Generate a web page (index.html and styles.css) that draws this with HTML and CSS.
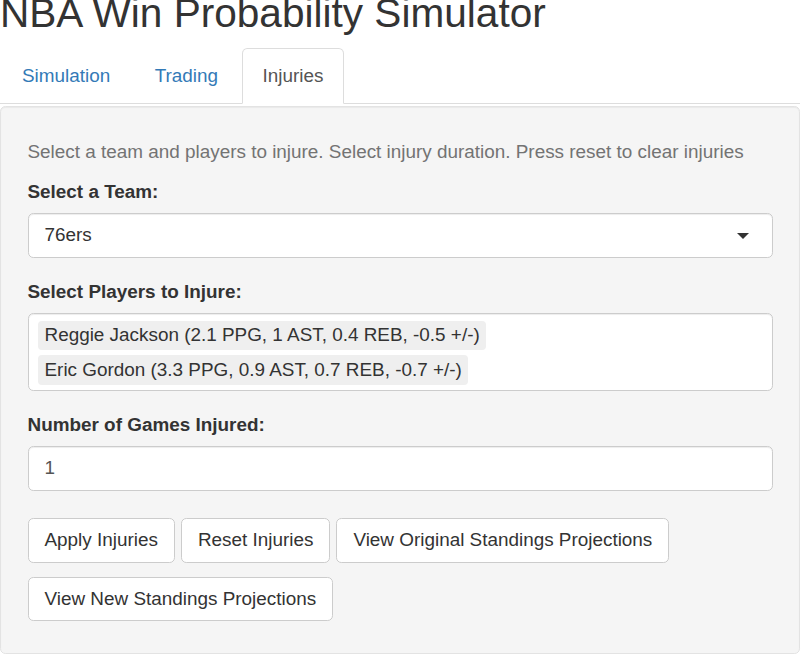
FILE: index.html
```html
<!DOCTYPE html>
<html lang="en">
<head>
<meta charset="utf-8">
<title>NBA Win Probability Simulator</title>
<link rel="stylesheet" href="styles.css">
</head>
<body>
<div class="page">
  <h2 class="title">NBA Win Probability Simulator</h2>
  <ul class="tabs">
    <li class="tab"><a href="#">Simulation</a></li>
    <li class="tab"><a href="#">Trading</a></li>
    <li class="tab active"><a href="#">Injuries</a></li>
  </ul>
  <div class="well">
    <span class="help">Select a team and players to injure. Select injury duration. Press reset to clear injuries</span>
    <div class="group">
      <label class="label">Select a Team:</label>
      <div class="select">
        <span class="select-value">76ers</span>
        <span class="caret"></span>
      </div>
    </div>
    <div class="group">
      <label class="label">Select Players to Injure:</label>
      <div class="multi">
        <span class="chip">Reggie Jackson (2.1 PPG, 1 AST, 0.4 REB, -0.5 +/-)</span>
        <span class="chip">Eric Gordon (3.3 PPG, 0.9 AST, 0.7 REB, -0.7 +/-)</span>
      </div>
    </div>
    <div class="group group-last">
      <label class="label">Number of Games Injured:</label>
      <input class="input" type="number" value="1">
    </div>
    <div class="actions">
      <button class="btn" type="button">Apply Injuries</button>
      <button class="btn" type="button">Reset Injuries</button>
      <button class="btn" type="button">View Original Standings Projections</button>
      <button class="btn" type="button">View New Standings Projections</button>
    </div>
  </div>
</div>
</body>
</html>
```

FILE: styles.css
```css
* {
  box-sizing: border-box;
}

html, body {
  margin: 0;
  padding: 0;
  background: #fff;
}

body {
  font-family: "Liberation Sans", Arial, Helvetica, sans-serif;
  font-size: 18.9px;
  line-height: 26.67px;
  color: #333;
}

.page {
  width: 800px;
}

.title {
  margin: -9px 0 13.33px 0;
  font-size: 40.6px;
  line-height: 44px;
  font-weight: 500;
  color: #333;
}

.tabs {
  list-style: none;
  margin: 0;
  padding: 0 0 0 1px;
  display: flex;
  border-bottom: 1px solid #ddd;
}

.tab {
  margin-bottom: -1px;
}

.tab a {
  display: block;
  padding: 13.33px 20px;
  margin-right: 2.5px;
  border: 1px solid transparent;
  border-radius: 5.33px 5.33px 0 0;
  color: #337ab7;
  text-decoration: none;
  line-height: 26.67px;
}

.tab.active a {
  color: #555;
  background: #fff;
  border-color: #ddd #ddd transparent #ddd;
}

.well {
  margin-top: 2px;
  padding: 25.33px 26.5px;
  background: #f5f5f5;
  border: 1px solid #e3e3e3;
  border-radius: 5.33px;
  box-shadow: inset 0 1px 1px rgba(0, 0, 0, 0.05);
}

.help {
  display: block;
  margin: 6.67px 0 13.33px;
  color: #737373;
}

.group {
  margin-bottom: 21px;
}

.group-last {
  margin-bottom: 0;
}

.label {
  display: inline-block;
  margin-bottom: 7.33px;
  font-weight: 700;
}

.select {
  display: flex;
  align-items: center;
  justify-content: space-between;
  height: 45.33px;
  padding: 8px 22.67px 8px 16px;
  background: #fff;
  border: 1px solid #ccc;
  border-radius: 5.33px;
  box-shadow: inset 0 1px 1px rgba(0, 0, 0, 0.075);
}

.caret {
  width: 0;
  height: 0;
  border-style: solid;
  border-width: 6.67px 6.67px 0 6.67px;
  border-color: #333 transparent transparent transparent;
  margin-top: 1px;
}

.multi {
  display: flex;
  flex-wrap: wrap;
  align-items: flex-start;
  gap: 5px 4px;
  padding: 7px 9px 5px;
  background: #fff;
  border: 1px solid #ccc;
  border-radius: 5.33px;
  box-shadow: inset 0 1px 1px rgba(0, 0, 0, 0.075);
}

.chip {
  display: block;
  padding: 1.33px 6px 1.33px 7px;
  background: #efefef;
  border-radius: 4px;
  color: #333;
}

.input {
  display: block;
  width: 100%;
  height: 45.33px;
  padding: 8px 16px;
  font-family: inherit;
  font-size: 18.9px;
  line-height: 26.67px;
  color: #555;
  background: #fff;
  border: 1px solid #ccc;
  border-radius: 5.33px;
  box-shadow: inset 0 1px 1px rgba(0, 0, 0, 0.075);
  outline: none;
}

.actions {
  display: flex;
  flex-wrap: wrap;
  gap: 13.67px 6px;
  padding: 27.33px 0 6.67px;
}

.btn {
  height: 44.67px;
  padding: 8px 16px;
  font-family: inherit;
  font-size: 18.9px;
  line-height: 26.67px;
  color: #333;
  background: #fff;
  border: 1px solid #ccc;
  border-radius: 5.33px;
  cursor: pointer;
}
```
